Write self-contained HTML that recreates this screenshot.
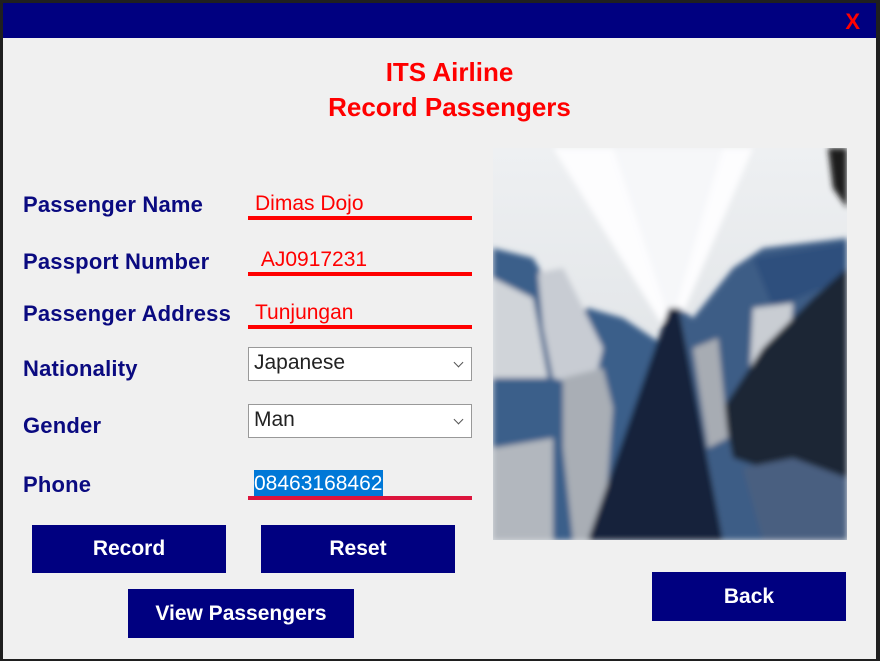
<!DOCTYPE html>
<html><head><style>
html,body{margin:0;padding:0;width:880px;height:661px;background:#1f1f1f;overflow:hidden;font-family:"Century Gothic","URW Gothic","Liberation Sans",sans-serif}
.win{position:absolute;left:3px;top:3px;width:873px;height:656px;background:#f0f0f0}
.bar{position:absolute;left:0;top:0;width:873px;height:35px;background:#000080}
.x{position:absolute;right:16px;top:6px;color:#f00;font-weight:bold;font-size:22px;font-family:"Liberation Sans",sans-serif}
.t{position:absolute;left:0;width:893px;text-align:center;color:#f00;font-weight:bold;font-size:26px}
.l{position:absolute;left:20px;color:#0a0a80;font-weight:bold;font-size:22px;letter-spacing:0.2px}
.v{position:absolute;left:252px;color:#f00;font-size:21px}
.u{position:absolute;left:245px;width:224px;height:4px;background:#f00}
.sel{position:absolute;left:245px;width:224px;height:34px;background:#fff;border:1px solid #999;box-sizing:border-box;font-size:21px;color:#222;padding-left:5px;line-height:30px}
.sel:after{content:"";position:absolute;right:9px;top:11px;width:6px;height:6px;border-right:1.5px solid #555;border-bottom:1.5px solid #555;transform:rotate(45deg)}
.b{position:absolute;background:#000080;color:#fff;font-weight:bold;font-size:21px;text-align:center}
</style></head><body>
<div class="win">
<div class="bar"><div class="x">X</div></div>
<div class="t" style="top:54px">ITS Airline</div>
<div class="t" style="top:89px">Record Passengers</div>

<div class="l" style="top:189px">Passenger Name</div>
<div class="l" style="top:246px">Passport Number</div>
<div class="l" style="top:298px">Passenger Address</div>
<div class="l" style="top:353px">Nationality</div>
<div class="l" style="top:410px">Gender</div>
<div class="l" style="top:469px">Phone</div>

<div class="v" style="top:189px">Dimas Dojo</div><div class="u" style="top:213px"></div>
<div class="v" style="top:245px">&nbsp;AJ0917231</div><div class="u" style="top:269px"></div>
<div class="v" style="top:298px">Tunjungan</div><div class="u" style="top:322px"></div>
<div class="sel" style="top:344px">Japanese</div>
<div class="sel" style="top:401px">Man</div>
<div style="position:absolute;left:251px;top:467px;background:#0078d7;color:#fff;font-size:21px;height:27px;line-height:27px;padding-right:1px">08463168462</div>
<div class="u" style="top:493px;background:#dc143c"></div>

<div class="b" style="left:29px;top:522px;width:194px;height:48px;line-height:48px">Record</div>
<div class="b" style="left:258px;top:522px;width:194px;height:48px;line-height:48px">Reset</div>
<div class="b" style="left:125px;top:586px;width:226px;height:49px;line-height:49px">View Passengers</div>
<div class="b" style="left:649px;top:569px;width:194px;height:49px;line-height:49px">Back</div>

<svg style="position:absolute;left:490px;top:145px" width="354" height="392" viewBox="0 0 354 392">
<defs>
<linearGradient id="c" x1="0" y1="0" x2="0" y2="1"><stop offset="0" stop-color="#eef0f2"/><stop offset="1" stop-color="#d8dce0"/></linearGradient>
<filter id="f"><feGaussianBlur stdDeviation="3"/></filter>
<clipPath id="k"><rect width="354" height="392"/></clipPath>
</defs>
<g clip-path="url(#k)">
<rect width="354" height="392" fill="url(#c)"/>
<g filter="url(#f)">
<polygon points="60,0 120,0 176,170 168,175" fill="#fdfdfe"/>
<polygon points="230,0 260,0 186,175 178,170" fill="#fdfdfe"/>
<polygon points="120,0 230,0 180,170 176,170" fill="#f6f7f9"/>
<polygon points="0,100 40,110 75,170 95,160 130,170 160,190 176,200 100,392 0,392" fill="#3b5f8a"/>
<polygon points="45,125 70,120 85,150 110,200 100,240 60,230 50,180" fill="#c8ccd3"/>
<polygon points="0,130 40,150 55,230 0,230" fill="#d0d4d9"/>
<polygon points="70,230 110,220 120,260 110,392 80,392 70,300" fill="#a9aeb5"/>
<polygon points="0,300 60,290 60,392 0,392" fill="#b2b7be"/>
<polygon points="176,160 186,160 230,392 95,392" fill="#15203a"/>
<polygon points="186,160 200,170 240,120 270,100 354,90 354,392 230,392" fill="#3c5d86"/>
<polygon points="260,110 354,95 354,130 280,160" fill="#2d4f7d"/>
<polygon points="260,160 300,155 290,260 255,260" fill="#c9cdd3"/>
<polygon points="354,120 354,330 300,330 240,310 230,260 270,200 320,150" fill="#1e2535"/>
<polygon points="335,0 354,0 354,60 340,40" fill="#1a1a1a"/>
<polygon points="250,320 300,310 354,330 354,392 270,392" fill="#4a5f80"/>
<polygon points="200,200 225,190 235,290 215,300" fill="#a7acb3"/>
</g>
</g>
</svg>
</div>
</body></html>
